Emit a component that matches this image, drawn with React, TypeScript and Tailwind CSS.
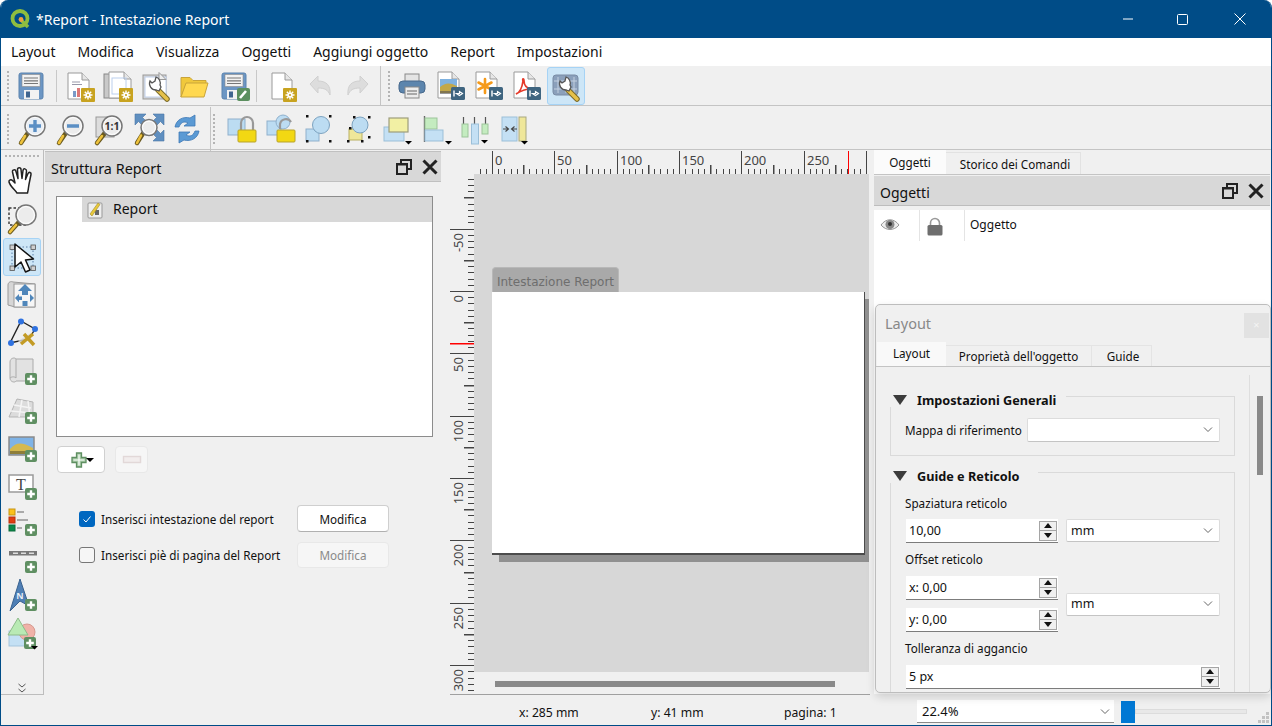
import React from "react";

const Ic = ({ children, s = 32 }: { children: React.ReactNode; s?: number }) => (
  <svg width={s} height={s} viewBox="0 0 32 32" className="block shrink-0 overflow-visible">{children}</svg>
);

const GearB = ({ x = 17, y = 18 }: { x?: number; y?: number }) => (
  <g transform={`translate(${x} ${y})`}>
    <rect width="14" height="14" rx="1" fill="#c8a320" />
    <g stroke="#fff" strokeWidth="1.4">
      <path d="M7 2.5v9M2.5 7h9M3.8 3.8l6.4 6.4M10.2 3.8l-6.4 6.4" />
    </g>
    <circle cx="7" cy="7" r="2.6" fill="#fff" />
    <circle cx="7" cy="7" r="1.1" fill="#c8a320" />
  </g>
);
const PlusB = ({ x = 19, y = 19 }: { x?: number; y?: number }) => (
  <g transform={`translate(${x} ${y})`}>
    <rect width="12" height="12" rx="2" fill="#5f8f62" />
    <path d="M6 2.2v7.6M2.2 6h7.6" stroke="#fff" strokeWidth="2.4" />
  </g>
);
const ExportB = () => (
  <g transform="translate(17 17)">
    <rect width="14" height="13" rx="1.5" fill="#3f6580" />
    <path d="M3 3.5v6" stroke="#fff" strokeWidth="1.4" />
    <path d="M5.5 6.5h3V4.5l3 2-3 2z" fill="none" stroke="#fff" strokeWidth="1.2" />
  </g>
);
const Page = ({ x = 4, y = 3, w = 21, h = 26, fill = "#fff" }: { x?: number; y?: number; w?: number; h?: number; fill?: string }) => (
  <g>
    <path d={`M${x} ${y}h${w - 7}l7 7v${h - 7}h-${w}z`} fill={fill} stroke="#9a9a9a" strokeWidth="1" />
    <path d={`M${x + w - 7} ${y}v7h7`} fill="#e6e6e6" stroke="#9a9a9a" strokeWidth="1" />
  </g>
);
const Floppy = () => (
  <g>
    <path d="M3 5a2 2 0 0 1 2-2h20a2 2 0 0 1 2 2v22a2 2 0 0 1-2 2H5a2 2 0 0 1-2-2z" fill="#6c96c4" stroke="#5a83ae" />
    <rect x="6" y="4.5" width="18" height="12" fill="#f2f2f2" stroke="#8a8a8a" strokeWidth=".6" />
    <path d="M8 8h14M8 10.8h14M8 13.5h14" stroke="#777" strokeWidth="1.2" />
    <rect x="8" y="20" width="15" height="9" fill="#f2f2f2" />
    <rect x="10" y="21.5" width="4" height="6" fill="#3f6590" />
  </g>
);
const Wrench = ({ o = 0 }: { o?: number }) => (
  <g transform={`translate(${o} ${o})`}>
    <path d="M17 19l9 9" stroke="#7a6a2a" strokeWidth="5.5" strokeLinecap="round" />
    <path d="M17 19l9 9" stroke="#e6c14a" strokeWidth="3.5" strokeLinecap="round" />
    <path d="M9 10a6.500 6.500 0 0 0 6 9l3 1 2-4-1-2a6.500 6.500 0 0 0-4-8l-1 4-3 2z" fill="#fff" stroke="#555" strokeWidth="1.3" />
  </g>
);
const Lens = ({ cx = 18, cy = 13, r = 10, children }: { cx?: number; cy?: number; r?: number; children?: React.ReactNode }) => (
  <g>
    <path d={`M${cx - r * 0.75} ${cy + r * 0.75}L4 30`} stroke="#6a5a20" strokeWidth="4.5" strokeLinecap="round" />
    <path d={`M${cx - r * 1.0} ${cy + r * 1.0}L4 30`} stroke="#eec23c" strokeWidth="2.6" strokeLinecap="round" />
    <circle cx={cx} cy={cy} r={r} fill="#ececec" stroke="#777" strokeWidth="1.5" />
    <circle cx={cx} cy={cy} r={r - 1.6} fill="none" stroke="#fff" strokeWidth="1" />
    {children}
  </g>
);
const Drop = ({ x = 26, y = 28 }: { x?: number; y?: number }) => <path d={`M${x} ${y}h7l-3.5 3.5z`} fill="#000" />;
const Lock = ({ x = 13, open = false }: { x?: number; open?: boolean }) => (
  <g>
    {open ? (
      <path d={`M${x + 3} 16v-5a6 6 0 0 1 11-2`} fill="none" stroke="#999" strokeWidth="2.2" />
    ) : (
      <path d={`M${x + 3} 18v-8a6 6 0 0 1 12 0v8`} fill="none" stroke="#999" strokeWidth="2.2" />
    )}
    <rect x={x} y="17" width="18" height="12" rx="1" fill="#f2d813" stroke="#b8a32a" />
  </g>
);

const icons: Record<string, React.ReactNode> = {
  save: <Floppy />,
  report: (
    <g>
      <Page />
      <path d="M8 12h8M8 14.5h10" stroke="#99a" strokeWidth="1" />
      <rect x="9" y="21" width="3" height="6" fill="#7a9ac8" />
      <rect x="13" y="18" width="3" height="9" fill="#d77" />
      <GearB />
    </g>
  ),
  dup: (
    <g>
      <rect x="2" y="4" width="20" height="24" fill="#c9c9c9" stroke="#888" />
      <Page x={7} y={2} w={22} h={26} />
      <rect x="10" y="8" width="14" height="16" fill="none" stroke="#bcd0ee" />
      <GearB />
    </g>
  ),
  manage: (
    <g>
      <rect x="3" y="5" width="23" height="24" fill="#d4d4d4" stroke="#999" />
      <rect x="5" y="7" width="21" height="20" fill="#fff" stroke="#c0d0ec" />
      <path d="M19 2.500l7 7h-7z" fill="#eee" stroke="#999" />
      <Wrench o={1} />
    </g>
  ),
  folder: (
    <g>
      <path d="M3 27V7.500h9l3 3h13v4H8z" fill="#f0c83c" stroke="#c9a43a" />
      <path d="M3 27l5-14h22l-4 14z" fill="#ffd850" stroke="#c9a43a" />
    </g>
  ),
  saveas: (
    <g transform="translate(3 0)">
      <Floppy />
      <rect x="18" y="18" width="13" height="13" rx="2" fill="#5b8f5f" />
      <path d="M21 28l6-7" stroke="#fff" strokeWidth="2.6" />
    </g>
  ),
  newp: (
    <g>
      <Page x={6} y={3} w={20} h={26} />
      <GearB x={17} y={18} />
    </g>
  ),
  undo: <path d="M6 14l8-8v5c8 0 13 4 12 14-2-5-5-7-12-7v5z" fill="#ddd" stroke="#d0d0d0" />,
  redo: <path d="M26 14l-8-8v5C10 11 5 15 6 25c2-5 5-7 12-7v5z" fill="#ddd" stroke="#d0d0d0" />,
  print: (
    <g>
      <rect x="9" y="4" width="14" height="9" fill="#e4e4e4" stroke="#888" />
      <rect x="3" y="11" width="26" height="12" rx="4" fill="#5c85ad" stroke="#48698c" />
      <rect x="9" y="17" width="14" height="11" fill="#ececec" stroke="#888" />
      <path d="M11 21h10M11 24h10" stroke="#666" />
    </g>
  ),
  eimg: (
    <g>
      <Page x={4} y={2} w={21} h={26} />
      <rect x="6" y="9" width="17" height="14" fill="#7fb2e0" />
      <path d="M6 23v-6c5-4 9-5 17-1v7z" fill="#c2a84a" />
      <rect x="6" y="21" width="17" height="3" fill="#555" opacity=".6" />
      <ExportB />
    </g>
  ),
  esvg: (
    <g>
      <Page x={4} y={2} w={21} h={26} />
      <g stroke="#f59a1a" strokeWidth="2.6" strokeLinecap="round">
        <path d="M13 9v14M6.500 12.500l13 7M19.500 12.500l-13 7" />
      </g>
      <ExportB />
    </g>
  ),
  epdf: (
    <g>
      <Page x={4} y={2} w={21} h={26} />
      <path d="M6 24c3-1 6-6 7-13-1-3 1-3 1 0 0 4 3 7 7 8-4 0-9 1-15 5z" fill="none" stroke="#e53a2a" strokeWidth="1.7" />
      <ExportB />
    </g>
  ),
  settings: (
    <g>
      <rect x="3" y="5" width="25" height="20" rx="3" fill="#8ba0bb" stroke="#7a8ca5" />
      <path d="M8 7v16M16 7v16M24 7v16M4 11h23M4 19h23" stroke="#c3d0e0" strokeWidth="1" />
      <Wrench o={1} />
    </g>
  ),
  zin: (
    <Lens>
      <circle cx="18" cy="13" r="8" fill="#e8eef5" />
      <path d="M18 7v12M12 13h12" stroke="#5b8fc4" strokeWidth="3.4" />
    </Lens>
  ),
  zout: (
    <Lens>
      <path d="M12 13h12" stroke="#5b8fc4" strokeWidth="3.4" />
    </Lens>
  ),
  z11: (
    <g>
      <rect x="3" y="4" width="18" height="20" fill="#ddd" stroke="#999" />
      <Lens cx={19} cy={13} r={10}>
        <text x="19" y="17" textAnchor="middle" fontSize="10.500" fontWeight="700" fill="#333">1:1</text>
      </Lens>
    </g>
  ),
  zfull: (
    <g transform="translate(2 0)">
      <path d="M2 1h11l-3.500 3.500 4 4-4 4-4-4L2 12z" fill="#5f8fc0" stroke="#4a76a5" strokeWidth=".6" />
      <path d="M31 1H20l3.500 3.500-4 4 4 4 4-4L31 12z" fill="#5f8fc0" stroke="#4a76a5" strokeWidth=".6" />
      <path d="M31 28H20l3.500-3.500-4-4 4-4 4 4L31 17z" fill="#5f8fc0" stroke="#4a76a5" strokeWidth=".6" />
      <Lens cx={16} cy={14.500} r={8} />
    </g>
  ),
  refresh: (
    <g fill="#5b9ad4" stroke="#3f78b5" strokeWidth=".8" transform="translate(2 0)">
      <path d="M4 14c1-7 8-11 15-9l5-3v11h-11l4-3c-4-2-7-1-9 4z" />
      <path d="M28 18c-1 7-8 11-15 9l-5 3V19h11l-4 3c4 2 7 1 9-4z" />
    </g>
  ),
  lock: (
    <g>
      <rect x="3" y="6" width="17" height="16" fill="#bcdcf2" stroke="#8fb0cc" />
      <Lock />
    </g>
  ),
  unlock: (
    <g>
      <rect x="3" y="8" width="14" height="14" fill="#bcdcf2" stroke="#8fb0cc" />
      <circle cx="19" cy="9" r="7" fill="#bcdcf2" stroke="#8fb0cc" />
      <Lock open />
    </g>
  ),
  group: (
    <g>
      <rect x="3" y="16" width="13" height="12" fill="#bcdcf2" stroke="#8fb0cc" />
      <circle cx="18" cy="12" r="8.500" fill="#bcdcf2" stroke="#7da3c0" />
      <g fill="#111">
        <rect x="3" y="2" width="2.500" height="2.500" />
        <rect x="26" y="2" width="2.500" height="2.500" />
        <rect x="3" y="27" width="2.500" height="2.500" />
        <rect x="26" y="27" width="2.500" height="2.500" />
      </g>
    </g>
  ),
  ungroup: (
    <g>
      <rect x="7" y="16" width="13" height="11" fill="#efe79a" stroke="#b9b060" />
      <circle cx="18" cy="12" r="8" fill="#bcdcf2" stroke="#7da3c0" />
      <g fill="#111">
        <rect x="7" y="14" width="2.500" height="2.500" />
        <rect x="26" y="3" width="2.500" height="2.500" />
        <rect x="26" y="23" width="2.500" height="2.500" />
        <rect x="5" y="27" width="2.500" height="2.500" />
        <rect x="19" y="27" width="2.500" height="2.500" />
        <rect x="11" y="3" width="2.500" height="2.500" />
      </g>
    </g>
  ),
  raise: (
    <g>
      <rect x="3" y="14" width="20" height="14" fill="#c4e0f4" stroke="#9bbfd8" />
      <rect x="8" y="5" width="19" height="14" fill="#f2f0a4" stroke="#9d9d7c" strokeWidth="1.200" />
      <Drop x={24} y={28} />
    </g>
  ),
  align: (
    <g>
      <path d="M4.500 3v26" stroke="#666" strokeWidth="1.400" />
      <rect x="5" y="5" width="12" height="11" fill="#c4ecc0" stroke="#9cc49a" />
      <rect x="5" y="17" width="18" height="11" fill="#c4e0f4" stroke="#9bbfd8" />
      <Drop x={25} y={28} />
    </g>
  ),
  dist: (
    <g>
      <path d="M4.500 4v10M15.500 4v10M26.500 4v10" stroke="#555" strokeWidth="1.200" />
      <rect x="3" y="11" width="6" height="13" fill="#c4ecc0" stroke="#9cc49a" />
      <rect x="12.500" y="11" width="7" height="20" fill="#c4e0f4" stroke="#9bbfd8" />
      <rect x="23" y="11" width="6" height="10" fill="#c4ecc0" stroke="#9cc49a" />
      <Drop x={22} y={27} />
    </g>
  ),
  resize: (
    <g>
      <rect x="4" y="4" width="15" height="24" fill="#c4e0f4" stroke="#9bbfd8" />
      <rect x="21" y="4" width="7" height="24" fill="#efe79a" stroke="#a8a880" />
      <path d="M5 16h5M7.500 13.500l3 2.500-3 2.500M19 16h-5M16.500 13.500l-3 2.500 3 2.500" fill="none" stroke="#444" strokeWidth="1.100" />
      <Drop x={23} y={28} />
    </g>
  ),
  hand: (
    <path d="M11 28c-2-3-7-7-8-11-.5-2 2-3 3.500-1.500L9 18 6.500 7c-.5-2.500 3-3 3.500-.5l2 7-.5-9c0-2.500 3.500-2.500 3.500 0l1 9 1-8c.5-2.500 3.500-2 3.500.5l-1 8.500 2.500-6c1-2 3.500-1 3 1-1 5-2 9-2.500 13-.2 2-.5 3.500-1 5.500z" fill="#fff" stroke="#222" strokeWidth="1.500" strokeLinejoin="round" />
  ),
  tzoom: (
    <g transform="translate(0 -1)">
      <rect x="3" y="6" width="18" height="17" fill="none" stroke="#333" strokeDasharray="2.500 2" strokeWidth="1.400" />
      <Lens cx={20} cy={13} r={10} />
    </g>
  ),
  select: (
    <g>
      <rect x="6" y="6" width="21" height="21" fill="none" stroke="#5a7fa8" strokeDasharray="1.500 2" />
      <g fill="#cfcfcf" stroke="#555" strokeWidth=".8">
        <rect x="4" y="4" width="4.500" height="4.500" />
        <rect x="25" y="4" width="4.500" height="4.500" />
        <rect x="4" y="25" width="4.500" height="4.500" />
        <rect x="25" y="25" width="4.500" height="4.500" />
      </g>
      <path d="M9 3v23l6-5 4.500 10 4.500-2-4.500-10 8-1z" fill="#fff" stroke="#111" strokeWidth="1.500" strokeLinejoin="round" />
    </g>
  ),
  move: (
    <g>
      <path d="M2 6c0-3 3-4 5-3l22 2v23H9l-7-2z" fill="#d6d6d6" stroke="#999" />
      <rect x="8" y="5" width="21" height="23" fill="#f6f6f6" stroke="#999" />
      <path d="M19 5l7 7h-4v4h-6v-4h-4z" fill="#4f86ba" />
      <path d="M9 19l4-4v2.500h3v3.500h-3v2.500z" fill="#4f86ba" />
      <path d="M28 19l-4-4v8z" fill="#4f86ba" />
      <rect x="16.500" y="22" width="5" height="5" fill="#4f86ba" />
    </g>
  ),
  nodes: (
    <g>
      <path d="M15 4l14 8-6 10-19 4z" fill="none" stroke="#222" strokeWidth="1.400" />
      <path d="M12 24l13-8 3 2-13 9z" fill="#d9d9d9" opacity=".8" />
      <path d="M15 27l12-10M18 17l10 11" stroke="#c39b25" strokeWidth="3.400" />
      <circle cx="15" cy="4.500" r="3" fill="#2f72e0" />
      <circle cx="29" cy="12" r="3" fill="#2f72e0" />
      <circle cx="5" cy="26" r="3" fill="#2f72e0" />
    </g>
  ),
  map: (
    <g transform="translate(0 -1)">
      <path d="M4 8c0-4 5-5 6-3h17v22H10c-1 2-6 1-6-3z" fill="#e2e2e2" stroke="#aaa" />
      <path d="M10 5v19c-2-2-5-1-6 0" fill="none" stroke="#aaa" />
      <PlusB />
    </g>
  ),
  map3d: (
    <g>
      <path d="M11 6l16 3 0 15H3z" fill="#dcdcdc" stroke="#b5b5b5" />
      <path d="M8 12l17 3M5 18l21 2M16 7l-3 17M22 8l2 16" stroke="#f4f4f4" strokeWidth="1.500" />
      <PlusB />
    </g>
  ),
  pic: (
    <g>
      <rect x="3" y="6" width="25" height="18" fill="#7fb3e6" stroke="#8a8a8a" strokeWidth="1.500" />
      <path d="M4 18c7-7 11-7 23-1v6H4z" fill="#d5b94f" />
      <path d="M4 23v-3h23v3z" fill="#8e7e3a" />
      <PlusB />
    </g>
  ),
  label: (
    <g>
      <rect x="3" y="6" width="24" height="17" fill="#fff" stroke="#9a9a9a" strokeWidth="1.500" />
      <text x="15" y="21" textAnchor="middle" fontSize="16" fontFamily="'Liberation Serif',serif" fill="#444">T</text>
      <PlusB />
    </g>
  ),
  legend: (
    <g transform="translate(0 -1)">
      <rect x="3" y="3" width="6" height="6" fill="#fbc21c" stroke="#c79412" />
      <rect x="3" y="11" width="6" height="6" fill="#e23e12" stroke="#b8300c" />
      <rect x="3" y="19" width="6" height="6" fill="#0b8a4a" stroke="#0a6a3a" />
      <path d="M11 6h7M11 14h11M11 22h5" stroke="#aaa" strokeWidth="2" />
      <PlusB y={18} />
    </g>
  ),
  scale: (
    <g transform="translate(0 -1)">
      <rect x="3" y="7" width="28" height="4.500" fill="#777" />
      <path d="M7 9.200h5M15 9.200h5M23 9.200h5" stroke="#ddd" strokeWidth="1.400" />
      <PlusB x={19} y={17} />
    </g>
  ),
  north: (
    <g transform="translate(0 -4)">
      <path d="M14 0l9 27-9-5L4 32z" fill="#4f7fb5" stroke="#3a628f" />
      <text x="14" y="20" textAnchor="middle" fontSize="9" fontWeight="700" fill="#e8eef5">N</text>
      <PlusB x={19} y={20} />
    </g>
  ),
  shape: (
    <g transform="translate(0 -2)">
      <rect x="3" y="12" width="17" height="15" fill="#c4e0f4" stroke="#a5c5dd" />
      <circle cx="21" cy="13" r="8" fill="#f0b2a8" stroke="#d69a90" />
      <path d="M12 -1l10 17H2z" fill="#b9eab4" stroke="#8dbb8a" />
      <PlusB x={18} y={18} />
      <Drop x={25} y={27} />
    </g>
  ),
};

const Tool = ({ n, active, className = "" }: { n: string; active?: boolean; className?: string }) => (
  <div className={`flex h-[38px] w-[38px] shrink-0 items-center justify-center rounded-[3px] border ${active ? "border-[#a6d3f5] bg-[#cde6f7]" : "border-transparent"} ${className}`}>
    <Ic>{icons[n]}</Ic>
  </div>
);

const HandleV = () => <div className="mx-[2px] h-[30px] w-[3px] border-l-2 border-dotted border-[#b4b4b4]" />;
const Sep = () => <div className="mx-[4.500px] h-[32px] w-px bg-[#c8c8c8]" />;
const ChevDown = () => (
  <svg width="14" height="8" viewBox="0 0 14 8" className="shrink-0"><path d="M3 1.500l4 4 4-4" fill="none" stroke="#666" strokeWidth="1" /></svg>
);

const Combo = ({ v, className = "" }: { v?: string; className?: string }) => (
  <div className={`flex items-center justify-between rounded-[2px] border border-[#dcdcdc] border-b-[#c4c4c4] bg-white pl-[4px] pr-[4px] text-[12.500px] text-[#111] ${className}`}>
    <span className="pt-[1px]">{v}</span>
    <ChevDown />
  </div>
);
const SpinBtn = () => (
  <div className="flex h-[20px] w-[18px] shrink-0 flex-col border border-[#a5a5a5] bg-[#f0f0f0]">
    <div className="flex flex-1 items-center justify-center border-b border-[#a5a5a5]">
      <svg width="8" height="5" viewBox="0 0 8 5"><path d="M0 5l4-5 4 5z" fill="#111" /></svg>
    </div>
    <div className="flex flex-1 items-center justify-center">
      <svg width="8" height="5" viewBox="0 0 8 5"><path d="M0 0l4 5 4-5z" fill="#111" /></svg>
    </div>
  </div>
);
const Spin = ({ v, className = "" }: { v: string; className?: string }) => (
  <div className={`ml-px flex h-[24px] items-center justify-between border-b border-[#7c7c7c] bg-white pl-[3px] pr-[1px] text-[12.500px] text-[#111] ${className}`}>
    <span className="pt-[2px]">{v}</span>
    <SpinBtn />
  </div>
);
const Group = ({ title, line, className = "", children }: { title: string; line: number; className?: string; children: React.ReactNode }) => (
  <div className={`relative border border-[#dadada] ${className}`}>
    <div className="absolute left-[-1px] top-[-4px] flex h-[14px] items-center bg-[#f0f0f0] pr-[8px]" style={{ width: line }}>
      <svg width="14" height="10" viewBox="0 0 14 10" className="ml-[3px] shrink-0"><path d="M0 0h14L7 10z" fill="#3c3c3c" /></svg>
      <span className="ml-[10px] whitespace-nowrap pt-[1px] text-[12.700px] font-bold text-[#111]">{title}</span>
    </div>
    {children}
  </div>
);

const HRuler = () => {
  const x0 = 18;
  const k = 1.247;
  const ticks: React.ReactNode[] = [];
  for (let m = -10; m <= 300; m += 5) {
    const x = x0 + m * k;
    if (x > 393) break;
    const h = m % 50 === 0 ? 23 : m % 25 === 0 ? 9 : 5;
    ticks.push(<rect key={m} x={Math.round(x)} y={23 - h} width={m % 50 !== 0 && m % 25 === 0 && m % 2 !== 0 ? 1.500 : 1} height={h} fill="#444" />);
  }
  return (
    <svg width="395" height="23" className="block">
      {ticks}
      {[0, 50, 100, 150, 200, 250].map((m) => (
        <text key={m} x={Math.round(x0 + m * k) + 3} y="14" fontSize="13" fill="#444">{m}</text>
      ))}
      <rect x="374" y="0" width="1" height="23" fill="#f00" />
    </svg>
  );
};
const VRuler = () => {
  const y0 = 117;
  const k = 1.247;
  const ticks: React.ReactNode[] = [];
  for (let m = -90; m <= 320; m += 5) {
    const y = y0 + m * k;
    if (y < 4 || y > 520) continue;
    const w = m % 50 === 0 ? 24 : m % 25 === 0 ? 10 : 6;
    ticks.push(<rect key={m} x={24 - w} y={Math.round(y)} width={w} height={m % 50 !== 0 && m % 25 === 0 ? 1.500 : 1} fill="#444" />);
  }
  return (
    <svg width="24" height="520" className="block shrink-0">
      {ticks}
      {[-50, 0, 50, 100, 150, 200, 250, 300].map((m) => {
        const y = Math.round(y0 + m * k) + 4;
        return (
          <text key={m} transform={`translate(13 ${y}) rotate(-90)`} textAnchor="end" fontSize="13" fill="#444">{m}</text>
        );
      })}
      <rect x="0" y="169" width="24" height="1.500" fill="#f00" />
    </svg>
  );
};

const TitleBtn = ({ kind }: { kind: "restore" | "close" }) =>
  kind === "restore" ? (
    <svg width="18" height="18" viewBox="0 0 18 18" className="shrink-0"><path d="M6 5V2h10v9h-3M2 6h10v10H2z M2 6.500h10" fill="none" stroke="#222" strokeWidth="2" /></svg>
  ) : (
    <svg width="18" height="18" viewBox="0 0 18 18" className="shrink-0"><path d="M2.500 2.500l13 13M15.500 2.500l-13 13" stroke="#222" strokeWidth="3" /></svg>
  );

export default function App() {
  const t1a = ["report", "dup", "manage", "folder", "saveas"];
  const left = ["hand", "tzoom", "select", "move", "nodes", "map", "map3d", "pic", "label", "legend", "scale", "north", "shape"];
  return (
    <div className="relative flex h-[726px] w-[1272px] flex-col overflow-hidden rounded-t-[8px] border-x border-b border-[#004c87] bg-[#f0f0f0] font-['Segoe_UI','Noto_Sans',sans-serif] text-[#111]">
      {/* title bar */}
      <div className="flex h-[38px] shrink-0 items-center bg-[#004c87] pl-[9px] text-white">
        <svg width="20" height="20" viewBox="0 0 20 20" className="shrink-0">
          <circle cx="10" cy="9.500" r="7.500" fill="none" stroke="#8fbd3f" strokeWidth="3.800" />
          <path d="M11 11l7 7" stroke="#8fbd3f" strokeWidth="3.600" />
          <circle cx="11" cy="10.500" r="2.400" fill="#f0a040" />
        </svg>
        <span className="ml-[6px] text-[14px]">*Report - Intestazione Report</span>
        <div className="ml-auto flex items-center">
          <svg width="54" height="38" viewBox="0 0 54 38"><path d="M22 19h10" stroke="#fff" /></svg>
          <svg width="54" height="38" viewBox="0 0 54 38"><rect x="22.500" y="14.500" width="10" height="10" rx="1" fill="none" stroke="#fff" /></svg>
          <svg width="62" height="38" viewBox="0 0 62 38"><path d="M25.500 13.500l11 11M36.500 13.500l-11 11" stroke="#fff" /></svg>
        </div>
      </div>
      {/* menu */}
      <div className="flex h-[28px] shrink-0 items-center gap-[22px] bg-white pb-[2px] pl-[10px] text-[14px]">
        {["Layout", "Modifica", "Visualizza", "Oggetti", "Aggiungi oggetto", "Report", "Impostazioni"].map((m) => (
          <span key={m}>{m}</span>
        ))}
      </div>
      {/* toolbar 1 */}
      <div className="flex h-[40px] shrink-0 items-center border-b border-[#c4c4c4] pl-[4px]">
        <HandleV />
        <div className="w-[1px]" />
        <Tool n="save" />
        <Sep />
        {t1a.map((n) => <Tool key={n} n={n} />)}
        <Sep />
        <Tool n="newp" className="ml-[2px]" />
        <Tool n="undo" />
        <Tool n="redo" />
        <div className="ml-[3px] h-[40px] w-px bg-[#c4c4c4]" />
        <div className="w-[5px]" />
        <HandleV />
        <Tool n="print" />
        <Tool n="eimg" />
        <Tool n="esvg" />
        <Tool n="epdf" />
        <Tool n="settings" active className="ml-[2px]" />
      </div>
      {/* toolbar 2 */}
      <div className="flex h-[44px] shrink-0 items-center border-b border-[#c4c4c4] pl-[4px] pt-[2px]">
        <HandleV />
        <div className="w-[2px]" />
        {["zin", "zout", "z11", "zfull", "refresh"].map((n) => <Tool key={n} n={n} />)}
        <div className="ml-[6px] h-[44px] w-px bg-[#c4c4c4]" />
        <HandleV />
        <div className="w-[4px]" />
        {["lock", "unlock", "group", "ungroup", "raise", "align", "dist", "resize"].map((n) => <Tool key={n} n={n} className="mr-px" />)}
      </div>
      {/* body */}
      <div className="flex h-[545px] shrink-0">
        {/* left tools */}
        <div className="flex w-[43px] shrink-0 flex-col items-center border-r border-b border-[#bdbdbd] pt-[5px]">
          <div className="h-[3px] w-[34px] border-t-2 border-dotted border-[#b4b4b4]" />
          <div className="h-[4px]" />
          {left.map((n) => <Tool key={n} n={n} active={n === "select"} />)}
          <svg width="10" height="12" viewBox="0 0 10 12" className="mt-[26px]"><path d="M1.500 2l3.500 3 3.500-3M1.500 7l3.500 3 3.500-3" fill="none" stroke="#555" /></svg>
        </div>
        {/* report panel */}
        <div className="w-[400px] shrink-0 pl-[1px] pt-[1px]">
          <div className="flex h-[31px] w-[396px] items-center justify-between border-y border-[#c0c0c0] bg-[#d8d8d8] pl-[6px] pr-[2px] text-[14.400px]">
            <span className="pt-[4px]">Struttura Report</span>
            <div className="flex gap-[8px]"><TitleBtn kind="restore" /><TitleBtn kind="close" /></div>
          </div>
          <div className="ml-[11px] mt-[14px] h-[241px] w-[377px] border border-[#8c8c8c] bg-white pl-[25px]">
            <div className="flex h-[25px] items-center bg-[#d8d8d8] pb-[2px] pl-[4px] text-[14px]">
              <svg width="18" height="18" viewBox="0 0 18 18" className="mt-[2px] shrink-0">
                <rect x="2" y="2" width="14" height="15" rx="1" fill="#eee" stroke="#999" />
                <rect x="9" y="9" width="4" height="5" fill="#666" />
                <path d="M4 13L12 2l2 1.500L6 15z" fill="#e9c93a" stroke="#9f8a2a" strokeWidth=".6" />
              </svg>
              <span className="ml-[9px]">Report</span>
            </div>
          </div>
          <div className="ml-[12px] mt-[9px] flex items-center gap-[10px]">
            <div className="flex h-[27px] w-[48px] items-center justify-center rounded-[4px] border border-[#d0d0d0] bg-white pl-[8px]">
              <svg width="32" height="18" viewBox="0 0 32 18">
                <path d="M3 6.500h4.500V2h5v4.500H17v5h-4.500V16h-5v-4.500H3z" fill="#a5c9a5" stroke="#5f8f62" strokeWidth="1.300" />
                <path d="M10 3.500v11M4.500 9h11" stroke="#fff" strokeWidth="1.200" />
                <path d="M17 7h8l-4 4z" fill="#000" />
              </svg>
            </div>
            <div className="flex h-[27px] w-[33px] items-center justify-center rounded-[4px] border border-[#e8e8e8] bg-[#f6f6f6]">
              <svg width="20" height="10" viewBox="0 0 20 10"><rect x="1.500" y="1.500" width="17" height="6" fill="#f2eded" stroke="#e2d8d8" strokeWidth="1.400" /></svg>
            </div>
          </div>
          <div className="ml-[34px] mt-[32px] flex h-[27px] items-center text-[11.700px]">
            <div className="flex h-[16px] w-[16px] items-center justify-center rounded-[3px] bg-[#0067c0]">
              <svg width="10" height="10" viewBox="0 0 10 10"><path d="M1.500 5.500l2.500 2.500 4.500-5.500" fill="none" stroke="#fff" /></svg>
            </div>
            <span className="ml-[6px] w-[196px] pt-[2px]">Inserisci intestazione del report</span>
            <div className="flex h-[27px] w-[92px] items-center justify-center rounded-[4px] border border-[#cfcfcf] border-b-[#b0b0b0] bg-white pt-[2px]">Modifica</div>
          </div>
          <div className="ml-[34px] mt-[10px] flex h-[26px] items-center text-[11.700px]">
            <div className="h-[16px] w-[16px] rounded-[3px] border border-[#777] bg-[#f6f6f6]" />
            <span className="ml-[6px] w-[196px] pt-[2px]">Inserisci piè di pagina del Report</span>
            <div className="flex h-[26px] w-[92px] items-center justify-center rounded-[4px] border border-[#e8e8e8] bg-[#f6f6f6] pt-[1px] text-[#8a8a8a]">Modifica</div>
          </div>
        </div>
        {/* center */}
        <div className="w-[426px] shrink-0 pl-[6px]">
          <div className="flex h-[24px] pt-[1px]">
            <div className="w-[24px]" />
            <HRuler />
          </div>
          <div className="flex h-[521px] border-b border-[#a0a0a0]">
            <VRuler />
            <div className="w-[395px]">
              <div className="h-[498px] w-[395px] overflow-hidden bg-[#d7d7d7] pl-[18px] pt-[93px]">
                <div className="flex h-[25px] w-[127px] items-center justify-center rounded-t-[4px] border border-b-0 border-[#b8b8b8] bg-[#a9a9a9] pt-[3px] font-['DejaVu_Sans',sans-serif] text-[12px] text-[#6e6e6e]">
                  <span className="whitespace-nowrap">Intestazione Report</span>
                </div>
                <div className="h-[263px] w-[373px] border-b-2 border-r border-[#4c4c4c] bg-white shadow-[7px_7px_0_#909090]" />
              </div>
              <div className="pl-[21px] pt-[9px]">
                <div className="h-[6px] w-[340px] bg-[#8a8a8a]" />
              </div>
            </div>
          </div>
        </div>
        {/* right */}
        <div className="flex-1 pl-[4px] pr-[1px]">
          <div className="flex h-[25px] items-end border-b border-[#c4c4c4] pt-[1px] text-[11.700px]">
            <div className="flex h-[24px] w-[72px] items-center justify-center bg-[#fbfbfb] pt-[2px]">Oggetti</div>
            <div className="flex h-[22px] w-[135px] items-center justify-center border-r border-t border-[#e2e2e2] pl-[4px] pt-[3px]">Storico dei Comandi</div>
          </div>
          <div className="mt-[1px] flex h-[30px] items-center justify-between border-b border-[#bdbdbd] bg-[#d8d8d8] pl-[6px] pr-[5px] text-[14px]">
            <span className="pt-[4px]">Oggetti</span>
            <div className="flex gap-[8px]"><TitleBtn kind="restore" /><TitleBtn kind="close" /></div>
          </div>
          <div className="mt-[4px] h-[484px] bg-white">
            <div className="flex h-[31px] text-[12px]">
              <div className="flex w-[46px] items-start border-r border-[#e4e4e4] pl-[6px] pt-[8px]">
                <svg width="20" height="14" viewBox="0 0 20 14">
                  <path d="M1 7c5-7 13-7 18 0-5 6-13 6-18 0z" fill="#eee" stroke="#999" />
                  <circle cx="10" cy="6.500" r="4.500" fill="#888" />
                  <circle cx="10" cy="6" r="2" fill="#333" />
                </svg>
              </div>
              <div className="flex w-[45px] items-start border-r border-[#e4e4e4] pl-[7px] pt-[7px]">
                <svg width="16" height="19" viewBox="0 0 16 19">
                  <path d="M3.500 9V6a4.500 4.500 0 0 1 9 0v3" fill="none" stroke="#999" strokeWidth="1.600" />
                  <rect x="0.500" y="8" width="15" height="10.500" rx="1.500" fill="#6e6e6e" />
                </svg>
              </div>
              <span className="pl-[5px] pt-[6px]">Oggetto</span>
            </div>
          </div>
        </div>
      </div>
      {/* status */}
      <div className="relative flex h-[30px] shrink-0 items-center pt-[3px] text-[12.200px]">
        <span className="ml-[518px] w-[132px] pt-[3px]">x: 285 mm</span>
        <span className="w-[133px] pt-[3px]">y: 41 mm</span>
        <span className="w-[133px] pt-[3px]">pagina: 1</span>
        <div className="flex h-[23px] w-[197px] items-center justify-between border-b border-[#8a8a8a] bg-white pl-[5px] pr-[2px] pt-[2px] text-[13px]">
          <span>22.4%</span>
          <ChevDown />
        </div>
        <div className="ml-[7px] h-[22px] w-[14px] bg-[#0078d4]" />
        <div className="h-[5px] w-[112px] border border-[#dcdcdc] bg-[#e8e8e8]" />
        <svg width="12" height="12" viewBox="0 0 12 12" className="absolute bottom-[1px] right-[1px]">
          <g fill="#c2c2c2"><rect x="8" y="0" width="3" height="3" /><rect x="4" y="4" width="3" height="3" /><rect x="8" y="4" width="3" height="3" /><rect x="0" y="8" width="3" height="3" /><rect x="4" y="8" width="3" height="3" /><rect x="8" y="8" width="3" height="3" /></g>
        </svg>
      </div>
      {/* floating layout panel */}
      <div className="absolute left-[874px] top-[304px] h-[389px] w-[396px] overflow-hidden rounded-[5px] border border-[#bdbdbd] bg-[#f0f0f0] shadow-[0_4px_10px_rgba(0,0,0,0.15)]">
        <div className="flex h-[38px] items-start justify-between pl-[9px]">
          <span className="pt-[8px] text-[14.500px] text-[#888]">Layout</span>
          <div className="mr-[1px] mt-[8px] flex h-[25px] w-[25px] items-center justify-center bg-[#e2e2e2] text-[11px] text-[#f4f4f4]">×</div>
        </div>
        <div className="flex h-[24px] items-end border-b border-[#c4c4c4] pl-[1px] text-[11.700px]">
          <div className="flex h-[24px] w-[69px] items-center justify-center bg-[#f9f9f9]">Layout</div>
          <div className="flex h-[21px] w-[146px] items-center justify-center border-r border-t border-[#e4e4e4] pt-[1px]">Proprietà dell'oggetto</div>
          <div className="flex h-[21px] w-[60px] items-center justify-center border-r border-t border-[#e4e4e4] pl-[3px] pt-[1px]">Guide</div>
        </div>
        <div className="relative h-[325px] pl-[14px] pt-[29px] text-[11.700px]">
          <div className="absolute bottom-0 left-[373px] top-[8px] w-px bg-[#dedede]" />
          <div className="absolute left-[381px] top-[29px] h-[79px] w-[6px] bg-[#8a8a8a]" />
          <Group title="Impostazioni Generali" line={176} className="h-[60px] w-[345px]">
            <div className="flex items-center pl-[14px] pt-[21px]">
              <span className="w-[122px] pt-[1px]">Mappa di riferimento</span>
              <Combo className="h-[24px] w-[193px]" />
            </div>
          </Group>
          <Group title="Guide e Reticolo" line={148} className="mt-[16px] h-[240px] w-[345px]">
            <div className="pl-[14px] pt-[23px]">
              <div className="h-[14px] leading-[14px]">Spaziatura reticolo</div>
              <div className="mt-[9px] flex gap-[8px]">
                <Spin v="10,00" className="w-[152px]" />
                <Combo v="mm" className="h-[23px] w-[154px]" />
              </div>
              <div className="mt-[9px] h-[14px] leading-[14px]">Offset reticolo</div>
              <div className="mt-[10px] flex items-center gap-[8px]">
                <div className="flex flex-col gap-[8px]">
                  <Spin v="x: 0,00" className="w-[152px]" />
                  <Spin v="y: 0,00" className="w-[152px]" />
                </div>
                <Combo v="mm" className="h-[23px] w-[154px]" />
              </div>
              <div className="mt-[9px] h-[14px] leading-[14px]">Tolleranza di aggancio</div>
              <Spin v="5 px" className="mt-[10px] w-[314px]" />
            </div>
          </Group>
        </div>
      </div>
    </div>
  );
}
